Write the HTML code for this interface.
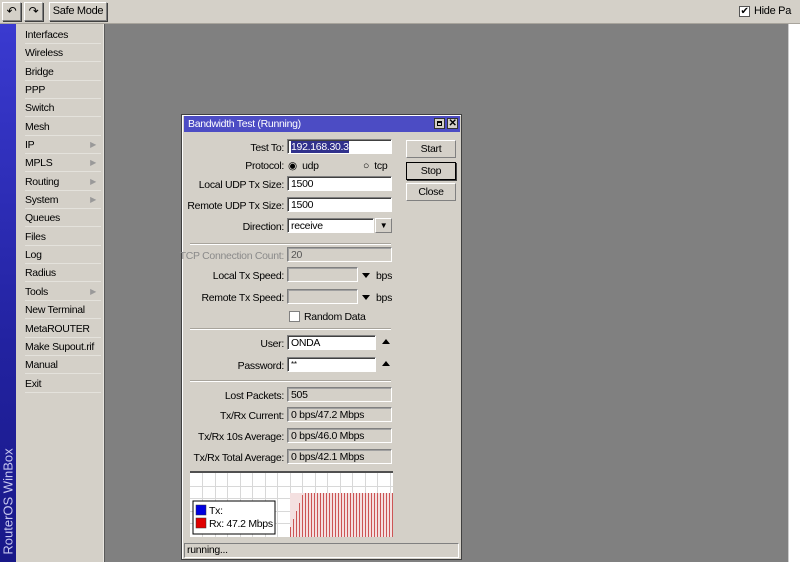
<!DOCTYPE html>
<html><head><meta charset="utf-8"><style>
*{margin:0;padding:0;box-sizing:border-box}
body{width:800px;height:562px;position:relative;overflow:hidden;background:#fff;font-family:"Liberation Sans",sans-serif;font-size:10.5px;color:#000;letter-spacing:-0.3px}
.a{position:absolute;white-space:nowrap}
.tb{left:0;top:0;width:800px;height:24px;background:#d4d0c8;border-bottom:1px solid #a8a49c}
.btn{position:absolute;background:#d4d0c8;border:1px solid;border-color:#fff #808080 #808080 #fff;box-shadow:1px 1px 0 #404040;text-align:center;white-space:nowrap}
.gray{left:104px;top:24px;width:684px;height:538px;background:#808080;border-left:1px solid #5a5a5a}
.blue{left:0;top:24px;width:16px;height:538px;background:linear-gradient(#3a3ad0,#2222a0 60%,#181888)}
.menu{left:16px;top:24px;width:88px;height:538px;background:#d4d0c8;border-right:1px solid #e8e6e0}
.mi{position:absolute;left:9px;width:76px;height:18px;line-height:18px;border-bottom:1px solid #e4e2dc;white-space:nowrap}
.arr{position:absolute;right:5px;top:0;color:#999;font-size:8px}
.win{left:181px;top:114px;width:281px;height:446px;background:#d4d0c8;border:1px solid #404040;box-shadow:inset 1px 1px 0 #fff}
.tt{left:2px;top:1px;width:276px;height:16px;background:#4c4cc4;color:#fff;padding-left:4px;line-height:16px;font-size:10.5px}
.lb{position:absolute;text-align:right;width:120px;left:-18px;white-space:nowrap}
.in{position:absolute;background:#fff;border:1px solid;border-color:#808080 #fff #fff #808080;box-shadow:inset 1px 1px 0 #404040;height:15px;padding-left:3px;line-height:14px;white-space:nowrap;overflow:hidden}
.ro{background:#d4d0c8;box-shadow:inset 1px 1px 0 #a0a0a0}
.sep{position:absolute;left:8px;width:201px;height:2px;border-top:1px solid #a8a49c;border-bottom:1px solid #fff}
.dn{width:0;height:0;border-left:4px solid transparent;border-right:4px solid transparent;border-top:5px solid #000;position:absolute}
.up{width:0;height:0;border-left:4px solid transparent;border-right:4px solid transparent;border-bottom:5px solid #000;position:absolute}
</style></head><body>
<div class="a tb">
<div class="btn" style="left:2px;top:2px;width:19px;height:19px;font-size:12px;line-height:17px">↶</div>
<div class="btn" style="left:24px;top:2px;width:19px;height:19px;font-size:12px;line-height:17px">↷</div>
<div class="btn" style="left:49px;top:2px;width:58px;height:19px;line-height:17px;font-size:11px">Safe Mode</div>
<div class="a" style="left:739px;top:6px;width:11px;height:11px;background:#fff;border:1px solid #555;font-size:10px;line-height:9px;text-align:center">✔</div>
<div class="a" style="left:754px;top:5px;font-size:11px">Hide Pa</div>
</div>
<div class="a gray"></div>
<div class="a" style="left:788px;top:24px;width:12px;height:538px;background:#fff;border-left:1px solid #ccc"></div>
<div class="a blue"><div class="a" style="left:-48px;top:470px;width:112px;transform:rotate(-90deg);color:#c8c8f0;font-size:13px;text-align:center;letter-spacing:0">RouterOS WinBox</div></div>
<div class="a menu">
<div class="mi" style="top:2px">Interfaces</div>
<div class="mi" style="top:20px">Wireless</div>
<div class="mi" style="top:39px">Bridge</div>
<div class="mi" style="top:57px">PPP</div>
<div class="mi" style="top:75px">Switch</div>
<div class="mi" style="top:94px">Mesh</div>
<div class="mi" style="top:112px">IP<span class="arr">▶</span></div>
<div class="mi" style="top:130px">MPLS<span class="arr">▶</span></div>
<div class="mi" style="top:149px">Routing<span class="arr">▶</span></div>
<div class="mi" style="top:167px">System<span class="arr">▶</span></div>
<div class="mi" style="top:185px">Queues</div>
<div class="mi" style="top:204px">Files</div>
<div class="mi" style="top:222px">Log</div>
<div class="mi" style="top:240px">Radius</div>
<div class="mi" style="top:259px">Tools<span class="arr">▶</span></div>
<div class="mi" style="top:277px">New Terminal</div>
<div class="mi" style="top:296px">MetaROUTER</div>
<div class="mi" style="top:314px">Make Supout.rif</div>
<div class="mi" style="top:332px">Manual</div>
<div class="mi" style="top:351px">Exit</div>
</div>

<div class="a win">
<div class="a tt">Bandwidth Test (Running)
<div class="a" style="left:250px;top:2px;width:11px;height:11px;background:#d4d0c8;border:1px solid #333"><div style="margin:2px;width:5px;height:5px;border:1px solid #000;border-top-width:2px"></div></div>
<div class="a" style="left:263px;top:2px;width:11px;height:11px;background:#d4d0c8;border:1px solid #333;color:#000;font-size:10px;line-height:9px;text-align:center;font-weight:bold">✕</div>
</div>
<div class="lb" style="top:27px">Test To:</div>
<div class="in" style="left:105px;top:24px;width:105px"><span style="background:#31318c;color:#fff">192.168.30.3</span></div>
<div class="lb" style="top:45px">Protocol:</div>
<div class="a" style="left:106px;top:45px">◉&nbsp; udp</div>
<div class="a" style="left:181px;top:45px">○&nbsp; tcp</div>
<div class="lb" style="top:64px">Local UDP Tx Size:</div>
<div class="in" style="left:105px;top:61px;width:105px">1500</div>
<div class="lb" style="top:85px">Remote UDP Tx Size:</div>
<div class="in" style="left:105px;top:82px;width:105px">1500</div>
<div class="lb" style="top:106px">Direction:</div>
<div class="in" style="left:105px;top:103px;width:87px">receive</div>
<div class="btn" style="left:193px;top:103px;width:17px;height:15px;box-shadow:none;font-size:8px;line-height:13px">▼</div>
<div class="sep" style="top:128px"></div>
<div class="lb" style="top:135px;color:#8a8a8a">TCP Connection Count:</div>
<div class="in ro" style="left:105px;top:132px;width:105px;color:#555">20</div>
<div class="lb" style="top:155px">Local Tx Speed:</div>
<div class="in ro" style="left:105px;top:152px;width:71px"></div>
<div class="dn" style="left:180px;top:158px"></div><div class="a" style="left:194px;top:155px">bps</div>
<div class="lb" style="top:177px">Remote Tx Speed:</div>
<div class="in ro" style="left:105px;top:174px;width:71px"></div>
<div class="dn" style="left:180px;top:180px"></div><div class="a" style="left:194px;top:177px">bps</div>
<div class="a" style="left:107px;top:196px;width:11px;height:11px;background:#fff;border:1px solid #808080"></div>
<div class="a" style="left:122px;top:196px">Random Data</div>
<div class="sep" style="top:213px"></div>
<div class="lb" style="top:223px">User:</div>
<div class="in" style="left:105px;top:220px;width:89px">ONDA</div>
<div class="up" style="left:200px;top:224px"></div>
<div class="lb" style="top:245px">Password:</div>
<div class="in" style="left:105px;top:242px;width:89px;font-size:8px">**</div>
<div class="up" style="left:200px;top:246px"></div>
<div class="sep" style="top:265px"></div>
<div class="lb" style="top:275px">Lost Packets:</div>
<div class="in ro" style="left:105px;top:272px;width:105px">505</div>
<div class="lb" style="top:295px">Tx/Rx Current:</div>
<div class="in ro" style="left:105px;top:292px;width:105px">0 bps/47.2 Mbps</div>
<div class="lb" style="top:316px">Tx/Rx 10s Average:</div>
<div class="in ro" style="left:105px;top:313px;width:105px">0 bps/46.0 Mbps</div>
<div class="lb" style="top:337px">Tx/Rx Total Average:</div>
<div class="in ro" style="left:105px;top:334px;width:105px">0 bps/42.1 Mbps</div>
<svg class="a" style="left:8px;top:356px" width="203" height="66">
<rect width="203" height="66" fill="#fff"/>
<rect width="203" height="2" fill="#505050"/>
<g stroke="#d8d8d8" stroke-width="1">
<path d="M12.5 2V66M25.5 2V66M37.5 2V66M50.5 2V66M62.5 2V66M75.5 2V66M87.5 2V66M100.5 2V66M112.5 2V66M125.5 2V66M137.5 2V66M150.5 2V66M162.5 2V66M175.5 2V66M187.5 2V66M200.5 2V66M0 15.5H203M0 27.5H203M0 40.5H203M0 52.5H203"/></g>
<rect x="100" y="22" width="103" height="44" fill="#f4e0e0"/>
<g fill="#cc5555">
<rect x="100" y="56" width="1" height="10"/><rect x="103" y="48" width="1" height="18"/><rect x="106" y="40" width="1" height="26"/><rect x="109" y="32" width="1" height="34"/><rect x="112" y="24" width="1" height="42"/>
</g>
<rect x="115" y="22" width="88" height="44" fill="url(#p)"/>
<defs><pattern id="p" x="115" width="3" height="66" patternUnits="userSpaceOnUse"><rect width="1" height="66" fill="#cc5555"/></pattern></defs>
<rect x="3" y="30" width="82" height="33" fill="#fff" stroke="#000"/>
<rect x="6" y="34" width="10" height="10" fill="#0000e0" stroke="#333" stroke-width=".5"/>
<rect x="6" y="47" width="10" height="10" fill="#e00000" stroke="#333" stroke-width=".5"/>
<text x="19" y="43" font-family="Liberation Sans" font-size="10.5">Tx:</text>
<text x="19" y="56" font-family="Liberation Sans" font-size="10.5">Rx:  47.2 Mbps</text>
</svg>
<div class="a" style="left:2px;top:428px;width:275px;height:15px;border:1px solid;border-color:#808080 #fff #fff #808080;padding-left:2px;line-height:13px;font-size:10.5px">running...</div>
<div class="btn" style="left:224px;top:25px;width:50px;height:18px;line-height:16px;box-shadow:none">Start</div>
<div class="btn" style="left:224px;top:47px;width:50px;height:18px;line-height:16px;border:1px solid #000">Stop</div>
<div class="btn" style="left:224px;top:68px;width:50px;height:18px;line-height:16px;box-shadow:none">Close</div>
</div>
</body></html>
